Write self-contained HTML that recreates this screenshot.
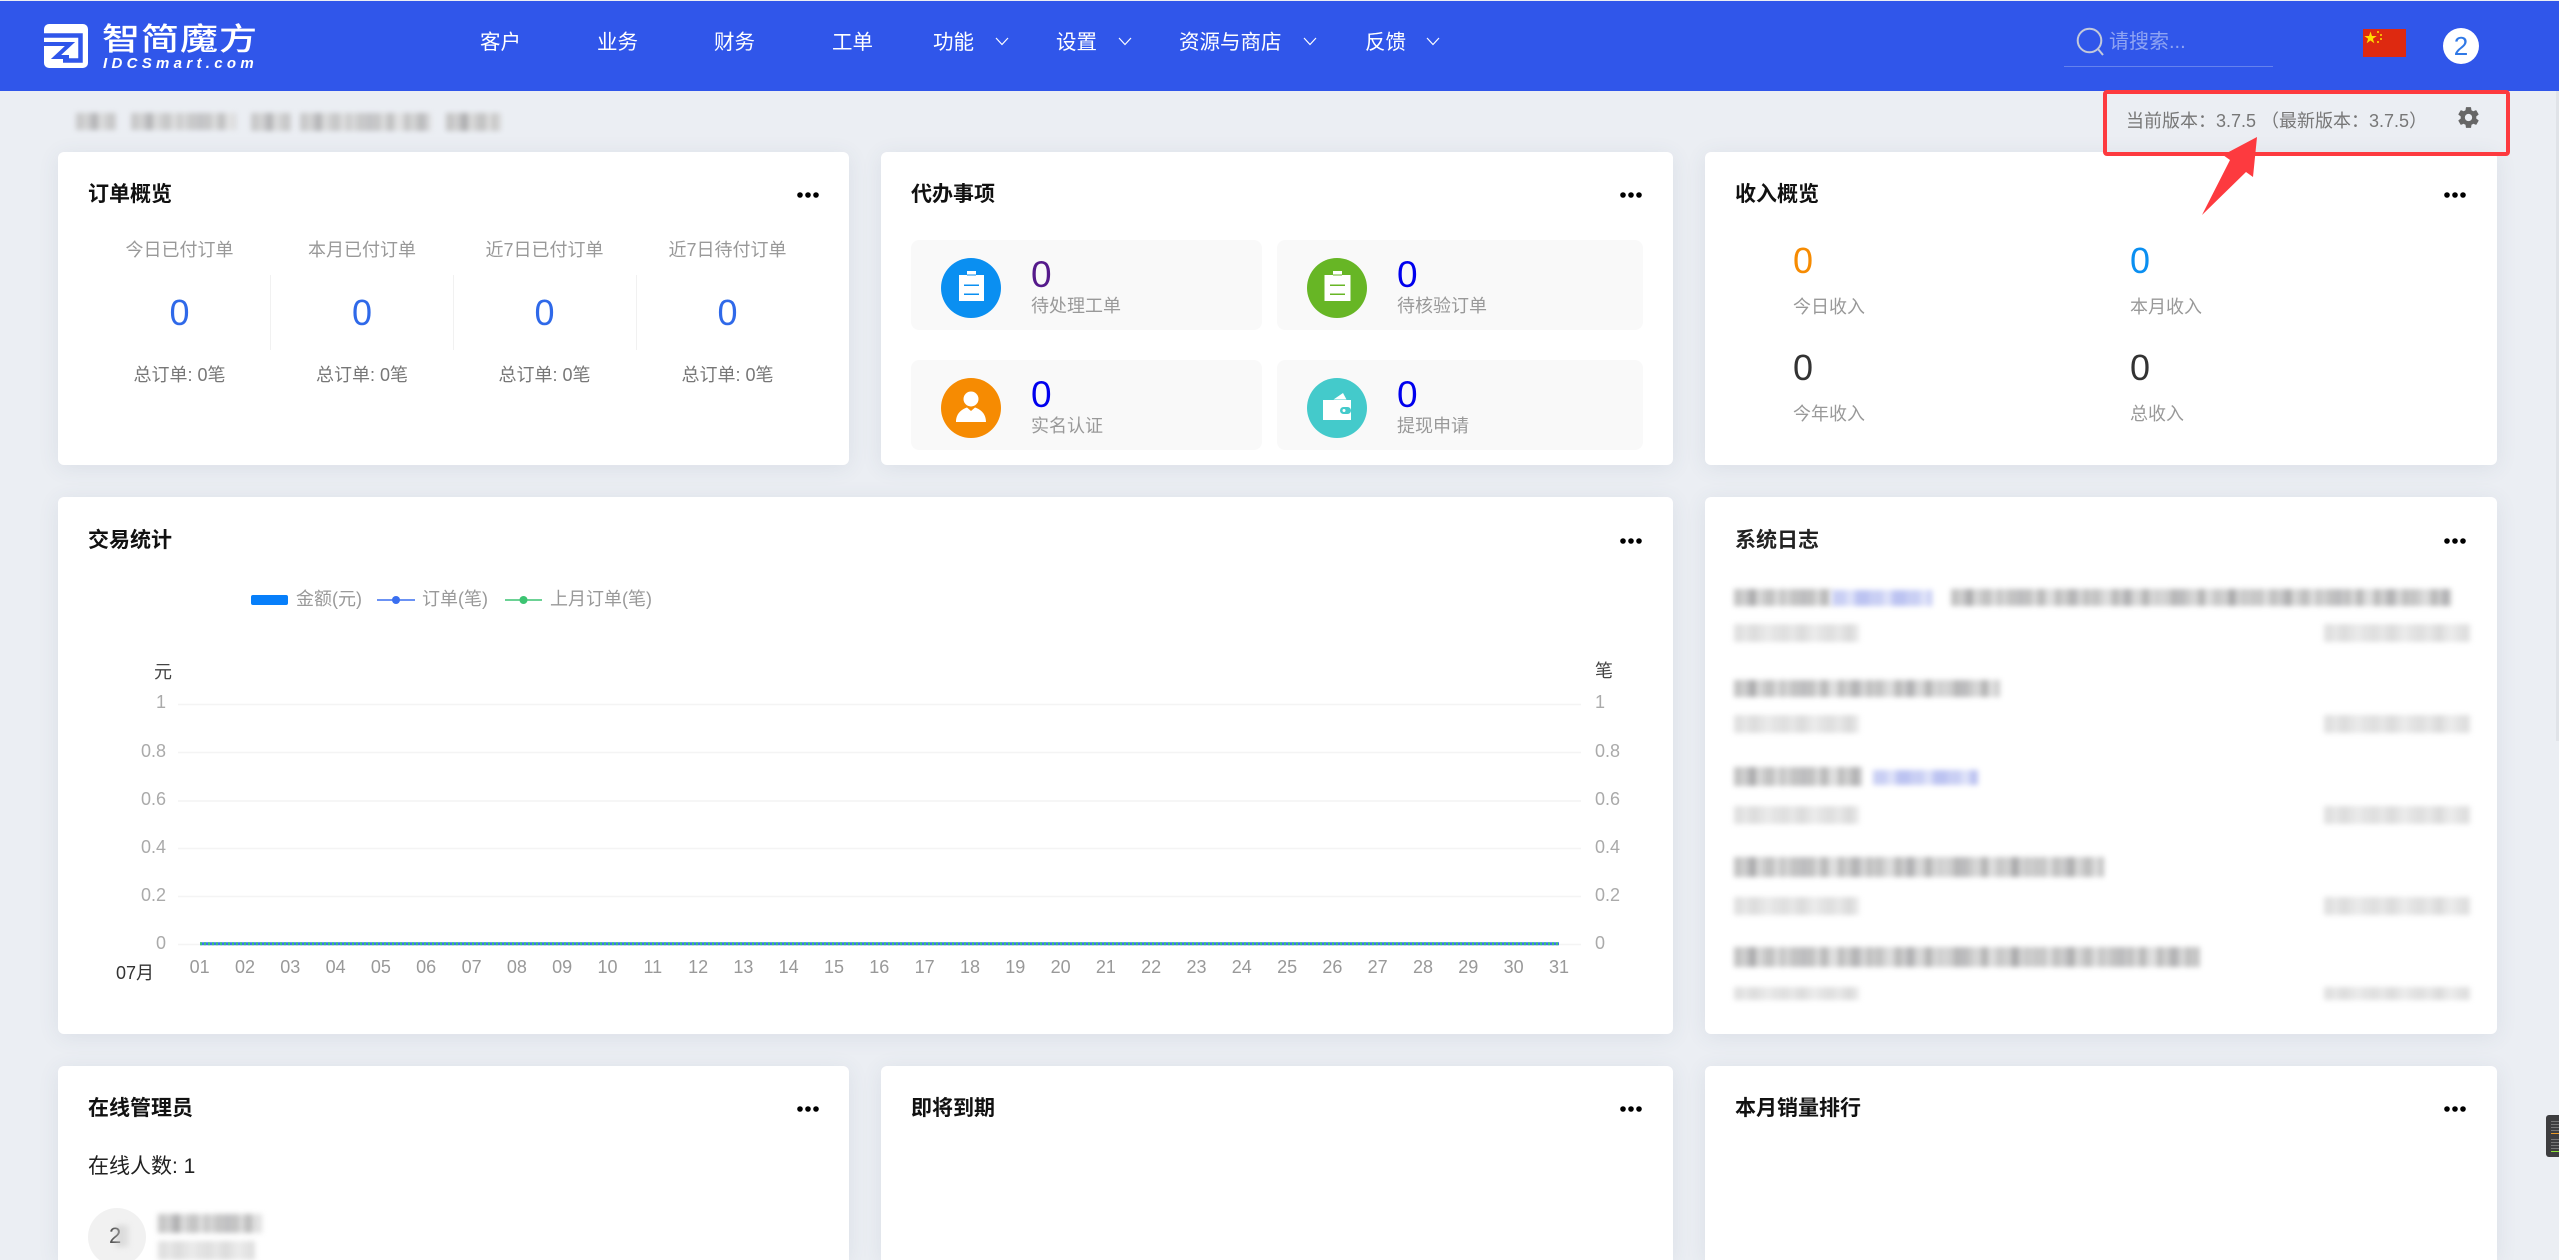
<!DOCTYPE html>
<html lang="zh-CN">
<head>
<meta charset="utf-8">
<title>智简魔方</title>
<style>
html,body{margin:0;padding:0;width:2559px;height:1260px;overflow:hidden;background:#ebeef3;font-family:"Liberation Sans","Noto Sans CJK SC",sans-serif}
*{box-sizing:border-box}
#w{position:relative;width:2559px;height:1260px;overflow:hidden;background:#ebeef3}
.a,.t{position:absolute}
.t{white-space:nowrap;line-height:30px;height:30px;font-size:18px;margin-top:1px}
.hd{position:absolute;left:0;top:1px;width:2559px;height:90px;background:#3056ea}
.nav{color:#fff;font-size:20.5px;top:27px}
.chev{position:absolute;top:36px;width:14px;height:10px}
.card{position:absolute;background:#fff;border-radius:6px;box-shadow:0 3px 22px rgba(60,75,110,.09)}
.card.cut{border-radius:6px 6px 0 0}
.title{font-weight:700;font-size:21px;color:#111;top:0}
.dots{position:absolute;width:22px;height:6px}
.c{text-align:center;transform:translateX(-50%)}
.lbl{color:#999}
.big{font-size:36px;line-height:40px;height:40px}
.tile{position:absolute;background:#f9f9f9;border-radius:8px;height:90px}
.circ{position:absolute;width:60px;height:60px;border-radius:50%}
.m{position:absolute;filter:blur(2.6px)}
.m1{background:repeating-linear-gradient(90deg,rgba(0,0,0,.07) 0 7px,transparent 7px 17px,rgba(0,0,0,.13) 17px 22px,transparent 22px 29px),repeating-linear-gradient(90deg,#d0d0d0 0 13px,#bcbcbe 13px 21px,#d8d8d8 21px 34px,#c6c6c6 34px 41px,#dfdfdf 41px 53px)}
.m2{background:repeating-linear-gradient(90deg,rgba(0,0,0,.03) 0 9px,transparent 9px 23px),repeating-linear-gradient(90deg,#e7e7e7 0 15px,#dedede 15px 24px,#ececec 24px 37px,#e4e4e4 37px 47px)}
.mb{background:repeating-linear-gradient(90deg,#c9cff4 0 14px,#dde1f9 14px 23px,#bcc3f1 23px 37px)}
</style>
</head>
<body>
<div id="w">

<div class="hd"></div>

<!-- logo -->
<svg class="a" style="left:44px;top:24px" width="44" height="44" viewBox="0 0 44 44">
  <rect width="44" height="44" rx="5" fill="#fff"/>
  <path d="M0 11.500H36.500V36.500H19" fill="none" stroke="#3056ea" stroke-width="4.500"/>
  <path d="M0 20H26L12 33H25" fill="none" stroke="#3056ea" stroke-width="4"/>
</svg>
<div class="t" style="left:102px;top:18px;height:36px;line-height:36px;font-size:38px;font-weight:500;color:#fff;letter-spacing:1px;transform:scaleY(.82);transform-origin:left center;font-family:'Noto Sans CJK SC',sans-serif">智简魔方</div>
<div class="t" style="left:103px;top:55px;height:16px;line-height:16px;font-size:15px;font-weight:700;font-style:italic;color:#fff;letter-spacing:4.300px">IDCSmart.com</div>

<!-- nav -->
<div class="t nav" style="left:480px">客户</div>
<div class="t nav" style="left:597px">业务</div>
<div class="t nav" style="left:714px">财务</div>
<div class="t nav" style="left:832px">工单</div>
<div class="t nav" style="left:933px">功能</div>
<div class="t nav" style="left:1056px">设置</div>
<div class="t nav" style="left:1179px">资源与商店</div>
<div class="t nav" style="left:1365px">反馈</div>
<svg class="chev" style="left:995px" viewBox="0 0 14 10"><path d="M1 2L7 8.500L13 2" fill="none" stroke="#fff" stroke-width="1.200"/></svg>
<svg class="chev" style="left:1118px" viewBox="0 0 14 10"><path d="M1 2L7 8.500L13 2" fill="none" stroke="#fff" stroke-width="1.200"/></svg>
<svg class="chev" style="left:1303px" viewBox="0 0 14 10"><path d="M1 2L7 8.500L13 2" fill="none" stroke="#fff" stroke-width="1.200"/></svg>
<svg class="chev" style="left:1426px" viewBox="0 0 14 10"><path d="M1 2L7 8.500L13 2" fill="none" stroke="#fff" stroke-width="1.200"/></svg>

<!-- search -->
<svg class="a" style="left:2076px;top:27px" width="28" height="29" viewBox="0 0 28 29"><circle cx="13.500" cy="13.500" r="11.800" fill="none" stroke="#c3c9db" stroke-width="2"/><path d="M22 22L27 28" stroke="#c3c9db" stroke-width="2"/></svg>
<div class="t" style="left:2109px;top:26px;font-size:20px;color:#8fa4f3">请搜索...</div>
<div class="a" style="left:2064px;top:66px;width:209px;height:1px;background:#6482ee"></div>

<!-- flag -->
<svg class="a" style="left:2363px;top:29px" width="43" height="28" viewBox="0 0 43 28">
  <rect width="43" height="28" fill="#de2910"/>
  <polygon points="7.500,2.500 9,7 13.700,7 9.900,9.800 11.300,14.200 7.500,11.500 3.700,14.200 5.100,9.800 1.300,7 6,7" fill="#ffde00"/>
  <circle cx="15" cy="3" r="1" fill="#ffde00"/><circle cx="18" cy="6" r="1" fill="#ffde00"/><circle cx="18" cy="10" r="1" fill="#ffde00"/><circle cx="15" cy="13" r="1" fill="#ffde00"/>
</svg>
<div class="a" style="left:2443px;top:28px;width:36px;height:36px;border-radius:50%;background:#fff;color:#2f78e6;font-size:26px;line-height:36px;text-align:center">2</div>

<!-- top note (blurred) -->
<div class="m m1" style="left:76px;top:113px;width:40px;height:17px;opacity:.85"></div>
<div class="m m1" style="left:131px;top:113px;width:105px;height:17px;opacity:.85"></div>
<div class="m m1" style="left:251px;top:113px;width:40px;height:18px;opacity:.85"></div>
<div class="m m1" style="left:300px;top:113px;width:131px;height:18px;opacity:.85"></div>
<div class="m m1" style="left:446px;top:113px;width:55px;height:18px;opacity:.95"></div>

<!-- CARD 1 -->
<div class="card" style="left:58px;top:152px;width:791px;height:313px"></div>
<div class="t title" style="left:88px;top:179px">订单概览</div>
<svg class="dots" style="left:797px;top:192px" viewBox="0 0 22 6"><circle cx="3" cy="3" r="2.800"/><circle cx="11" cy="3" r="2.800"/><circle cx="19" cy="3" r="2.800"/></svg>

<div class="t c lbl" style="left:179.500px;top:234px">今日已付订单</div>
<div class="t c lbl" style="left:362px;top:234px">本月已付订单</div>
<div class="t c lbl" style="left:544.500px;top:234px">近7日已付订单</div>
<div class="t c lbl" style="left:727.500px;top:234px">近7日待付订单</div>
<div class="t c big" style="left:179.500px;top:292px;color:#2f69e9">0</div>
<div class="t c big" style="left:362px;top:292px;color:#2f69e9">0</div>
<div class="t c big" style="left:544.500px;top:292px;color:#2f69e9">0</div>
<div class="t c big" style="left:727.500px;top:292px;color:#2f69e9">0</div>
<div class="a" style="left:270px;top:275px;width:1px;height:75px;background:#f1f1f1"></div>
<div class="a" style="left:453px;top:275px;width:1px;height:75px;background:#f1f1f1"></div>
<div class="a" style="left:636px;top:275px;width:1px;height:75px;background:#f1f1f1"></div>
<div class="t c" style="left:179.500px;top:359px;color:#777">总订单: 0笔</div>
<div class="t c" style="left:362px;top:359px;color:#777">总订单: 0笔</div>
<div class="t c" style="left:544.500px;top:359px;color:#777">总订单: 0笔</div>
<div class="t c" style="left:727.500px;top:359px;color:#777">总订单: 0笔</div>

<!-- CARD 2 -->
<div class="card" style="left:881px;top:152px;width:792px;height:313px"></div>
<div class="t title" style="left:911px;top:179px">代办事项</div>
<svg class="dots" style="left:1620px;top:192px" viewBox="0 0 22 6"><circle cx="3" cy="3" r="2.800"/><circle cx="11" cy="3" r="2.800"/><circle cx="19" cy="3" r="2.800"/></svg>

<div class="tile" style="left:911px;top:240px;width:351px"></div>
<div class="tile" style="left:1277px;top:240px;width:366px"></div>
<div class="tile" style="left:911px;top:360px;width:351px"></div>
<div class="tile" style="left:1277px;top:360px;width:366px"></div>

<div class="circ" style="left:941px;top:258px;background:#0a8ff1"></div>
<svg class="a" style="left:941px;top:258px" width="60" height="60" viewBox="0 0 60 60"><path d="M18 17H26V13H35V17H43V43H18Z" fill="#fff"/><rect x="26" y="16.500" width="9" height="1" fill="#0a8ff1"/><rect x="23" y="26.500" width="15" height="1.500" fill="#0a8ff1"/><rect x="23" y="35.500" width="15" height="1.500" fill="#0a8ff1"/></svg>
<div class="circ" style="left:1307px;top:258px;background:#67b625"></div>
<svg class="a" style="left:1307px;top:258px" width="60" height="60" viewBox="0 0 60 60"><path d="M17.500 17H26V13H35V17H43.500V43H17.500Z" fill="#fff"/><rect x="26" y="16.500" width="9" height="1" fill="#67b625"/><rect x="23" y="26.500" width="15" height="1.500" fill="#67b625"/><rect x="23" y="35.500" width="15" height="1.500" fill="#67b625"/></svg>
<div class="circ" style="left:941px;top:378px;background:#f68b02"></div>
<svg class="a" style="left:941px;top:378px" width="60" height="60" viewBox="0 0 60 60"><circle cx="30" cy="21" r="7.500" fill="#fff"/><path d="M15 44C15 36 20 31.500 26 29.500L30 33L34 29.500C40 31.500 45 36 45 44Z" fill="#fff"/></svg>
<div class="circ" style="left:1307px;top:378px;background:#44cacb"></div>
<svg class="a" style="left:1307px;top:378px" width="60" height="60" viewBox="0 0 60 60"><path d="M26.500 21.500L36 15L39.500 21.500Z" fill="#fff"/><rect x="16" y="22" width="28" height="20" fill="#fff"/><rect x="33" y="29" width="11" height="7" rx="3.500" fill="#44cacb"/><circle cx="37" cy="32.500" r="1.500" fill="#fff"/></svg>

<div class="t" style="left:1031px;top:254px;height:40px;line-height:40px;font-size:37px;color:#551a8b">0</div>
<div class="t" style="left:1397px;top:254px;height:40px;line-height:40px;font-size:37px;color:#0000ee">0</div>
<div class="t" style="left:1031px;top:374px;height:40px;line-height:40px;font-size:37px;color:#0000ee">0</div>
<div class="t" style="left:1397px;top:374px;height:40px;line-height:40px;font-size:37px;color:#0000ee">0</div>
<div class="t lbl" style="left:1031px;top:290px">待处理工单</div>
<div class="t lbl" style="left:1397px;top:290px">待核验订单</div>
<div class="t lbl" style="left:1031px;top:410px">实名认证</div>
<div class="t lbl" style="left:1397px;top:410px">提现申请</div>

<!-- CARD 3 -->
<div class="card" style="left:1705px;top:152px;width:792px;height:313px"></div>
<div class="t title" style="left:1735px;top:179px">收入概览</div>
<svg class="dots" style="left:2444px;top:192px" viewBox="0 0 22 6"><circle cx="3" cy="3" r="2.800"/><circle cx="11" cy="3" r="2.800"/><circle cx="19" cy="3" r="2.800"/></svg>
<div class="t big" style="left:1793px;top:240px;color:#f68b02">0</div>
<div class="t big" style="left:2130px;top:240px;color:#0a8ff1">0</div>
<div class="t big" style="left:1793px;top:347px;color:#333">0</div>
<div class="t big" style="left:2130px;top:347px;color:#333">0</div>
<div class="t lbl" style="left:1793px;top:291px">今日收入</div>
<div class="t lbl" style="left:2130px;top:291px">本月收入</div>
<div class="t lbl" style="left:1793px;top:398px">今年收入</div>
<div class="t lbl" style="left:2130px;top:398px">总收入</div>

<!-- CHART CARD -->
<div class="card" style="left:58px;top:497px;width:1615px;height:537px"></div>
<div class="t title" style="left:88px;top:525px">交易统计</div>
<svg class="dots" style="left:1620px;top:538px" viewBox="0 0 22 6"><circle cx="3" cy="3" r="2.800"/><circle cx="11" cy="3" r="2.800"/><circle cx="19" cy="3" r="2.800"/></svg>

<svg class="a" style="left:0;top:0" width="2559" height="1260" viewBox="0 0 2559 1260" font-family="'Liberation Sans','Noto Sans CJK SC',sans-serif" font-size="18">
  <!-- legend -->
  <rect x="251" y="595" width="37" height="10" rx="2" fill="#077ffa"/>
  <text x="296" y="605" fill="#999">金额(元)</text>
  <path d="M377 600H415" stroke="#3a6ff0" stroke-width="1.500"/><circle cx="396" cy="600" r="4" fill="#3a6ff0"/>
  <text x="422" y="605" fill="#999">订单(笔)</text>
  <path d="M505 600H542" stroke="#3cc472" stroke-width="1.500"/><circle cx="523.500" cy="600" r="4" fill="#3cc472"/>
  <text x="550" y="605" fill="#999">上月订单(笔)</text>
  <!-- grid -->
  <g stroke="#f4f4f4" stroke-width="1.500">
    <path d="M178 704.500H1581"/><path d="M178 752.500H1581"/><path d="M178 801H1581"/><path d="M178 848.500H1581"/><path d="M178 896.500H1581"/><path d="M178 944.500H1581"/>
  </g>
  <!-- line -->
  <path d="M200 943.700H1559" stroke="#3a6ff0" stroke-width="3"/>
  <path d="M200 943.700H1559" stroke="#3cc472" stroke-width="3" stroke-dasharray="2 2"/>
  <!-- y left -->
  <text x="172" y="678" fill="#444" text-anchor="end">元</text>
  <g fill="#aaa" text-anchor="end">
    <text x="166" y="708">1</text><text x="166" y="757">0.8</text><text x="166" y="805">0.6</text><text x="166" y="853">0.4</text><text x="166" y="901">0.2</text><text x="166" y="949">0</text>
  </g>
  <!-- y right -->
  <text x="1595" y="677" fill="#444">笔</text>
  <g fill="#aaa">
    <text x="1595" y="708">1</text><text x="1595" y="757">0.8</text><text x="1595" y="805">0.6</text><text x="1595" y="853">0.4</text><text x="1595" y="901">0.2</text><text x="1595" y="949">0</text>
  </g>
  <text x="116" y="979" fill="#333">07月</text>
  <g fill="#999" text-anchor="middle">
    <text x="199.700" y="973">01</text><text x="245" y="973">02</text><text x="290.300" y="973">03</text><text x="335.600" y="973">04</text><text x="380.900" y="973">05</text><text x="426.200" y="973">06</text><text x="471.600" y="973">07</text><text x="516.900" y="973">08</text><text x="562.200" y="973">09</text><text x="607.500" y="973">10</text><text x="652.800" y="973">11</text><text x="698.100" y="973">12</text><text x="743.400" y="973">13</text><text x="788.700" y="973">14</text><text x="834" y="973">15</text><text x="879.300" y="973">16</text><text x="924.600" y="973">17</text><text x="970" y="973">18</text><text x="1015.300" y="973">19</text><text x="1060.600" y="973">20</text><text x="1105.900" y="973">21</text><text x="1151.200" y="973">22</text><text x="1196.500" y="973">23</text><text x="1241.800" y="973">24</text><text x="1287.100" y="973">25</text><text x="1332.400" y="973">26</text><text x="1377.700" y="973">27</text><text x="1423" y="973">28</text><text x="1468.300" y="973">29</text><text x="1513.700" y="973">30</text><text x="1559" y="973">31</text>
  </g>
</svg>

<!-- LOG CARD -->
<div class="card" style="left:1705px;top:497px;width:792px;height:537px"></div>
<div class="t title" style="left:1735px;top:525px;color:#222">系统日志</div>
<svg class="dots" style="left:2444px;top:538px" viewBox="0 0 22 6"><circle cx="3" cy="3" r="2.800"/><circle cx="11" cy="3" r="2.800"/><circle cx="19" cy="3" r="2.800"/></svg>

<div class="m m1" style="left:1734px;top:589px;width:98px;height:17px"></div>
<div class="m mb" style="left:1832px;top:590px;width:100px;height:16px"></div>
<div class="m m1" style="left:1951px;top:589px;width:500px;height:17px"></div>
<div class="m m2" style="left:1734px;top:624px;width:125px;height:18px"></div>
<div class="m m2" style="left:2324px;top:624px;width:146px;height:18px"></div>

<div class="m m1" style="left:1734px;top:680px;width:266px;height:17px"></div>
<div class="m m2" style="left:1734px;top:715px;width:125px;height:18px"></div>
<div class="m m2" style="left:2324px;top:715px;width:146px;height:18px"></div>

<div class="m m1" style="left:1734px;top:767px;width:128px;height:19px"></div>
<div class="m mb" style="left:1873px;top:770px;width:105px;height:15px"></div>
<div class="m m2" style="left:1734px;top:806px;width:125px;height:18px"></div>
<div class="m m2" style="left:2324px;top:806px;width:146px;height:18px"></div>

<div class="m m1" style="left:1734px;top:857px;width:370px;height:20px"></div>
<div class="m m2" style="left:1734px;top:897px;width:125px;height:18px"></div>
<div class="m m2" style="left:2324px;top:897px;width:146px;height:18px"></div>

<div class="m m1" style="left:1734px;top:947px;width:466px;height:20px"></div>
<div class="m m2" style="left:1734px;top:987px;width:125px;height:13px"></div>
<div class="m m2" style="left:2324px;top:987px;width:146px;height:13px"></div>

<!-- ROW 3 -->
<div class="card cut" style="left:58px;top:1066px;width:791px;height:194px"></div>
<div class="t title" style="left:88px;top:1093px">在线管理员</div>
<svg class="dots" style="left:797px;top:1106px" viewBox="0 0 22 6"><circle cx="3" cy="3" r="2.800"/><circle cx="11" cy="3" r="2.800"/><circle cx="19" cy="3" r="2.800"/></svg>
<div class="t" style="left:88px;top:1151px;font-size:21px;color:#222">在线人数: 1</div>
<div class="a" style="left:88px;top:1208px;width:58px;height:52px;overflow:hidden"><div style="width:58px;height:58px;border-radius:50%;background:#f1f1f1"></div></div>
<div class="t" style="left:109px;top:1220px;color:#555;font-size:22px">2</div>
<div class="m m1" style="left:116px;top:1225px;width:13px;height:22px;opacity:.5"></div>
<div class="m m1" style="left:158px;top:1214px;width:104px;height:19px;opacity:.95"></div>
<div class="m m2" style="left:158px;top:1241px;width:97px;height:19px"></div>

<div class="card cut" style="left:881px;top:1066px;width:792px;height:194px"></div>
<div class="t title" style="left:911px;top:1093px">即将到期</div>
<svg class="dots" style="left:1620px;top:1106px" viewBox="0 0 22 6"><circle cx="3" cy="3" r="2.800"/><circle cx="11" cy="3" r="2.800"/><circle cx="19" cy="3" r="2.800"/></svg>

<div class="card cut" style="left:1705px;top:1066px;width:792px;height:194px"></div>
<div class="t title" style="left:1735px;top:1093px">本月销量排行</div>
<svg class="dots" style="left:2444px;top:1106px" viewBox="0 0 22 6"><circle cx="3" cy="3" r="2.800"/><circle cx="11" cy="3" r="2.800"/><circle cx="19" cy="3" r="2.800"/></svg>

<!-- version + annotation -->
<div class="t" style="left:2126px;top:105px;color:#777;font-size:18px">当前版本：3.7.5 （最新版本：3.7.5）</div>
<svg class="a" style="left:2456px;top:105px" width="25" height="25" viewBox="0 0 24 24"><path fill="#666" d="M19.400 13c.04-.33.1-.66.1-1s-.06-.67-.1-1l2.100-1.650a.5.500 0 0 0 .12-.64l-2-3.460a.5.500 0 0 0-.61-.22l-2.490 1a7.300 7.300 0 0 0-1.690-.98l-.38-2.650A.49.490 0 0 0 14 2h-4a.49.490 0 0 0-.49.420l-.38 2.650c-.61.25-1.170.59-1.690.98l-2.490-1a.49.490 0 0 0-.61.22l-2 3.460a.49.490 0 0 0 .12.64L4.570 11c-.04.33-.07.66-.07 1s.03.67.07 1l-2.110 1.650a.49.490 0 0 0-.12.640l2 3.460c.12.22.39.3.61.220l2.490-1c.52.4 1.080.73 1.690.98l.38 2.650c.03.24.24.42.49.420h4c.25 0 .46-.18.49-.42l.38-2.650c.61-.25 1.170-.59 1.690-.98l2.490 1c.22.08.49 0 .61-.22l2-3.460a.5.500 0 0 0-.12-.64L19.400 13zM12 15.500a3.500 3.500 0 1 1 0-7 3.500 3.500 0 0 1 0 7z"/></svg>
<div class="a" style="left:2103px;top:90px;width:407px;height:66px;border:4px solid #fd3a3f;border-radius:4px"></div>
<svg class="a" style="left:0;top:0" width="2559" height="230" viewBox="0 0 2559 230"><polygon points="2257,137 2253,177 2246,172 2202,215 2230,160 2223,155" fill="#fd3a3f"/></svg>

<!-- scrollbar and side widget -->
<div class="a" style="left:2556px;top:91px;width:3px;height:650px;background:#e0e3e8"></div>
<div class="a" style="left:2546px;top:1115px;width:13px;height:42px;background:#3d3d3f;border-radius:3px 0 0 3px"></div>
<div class="a" style="left:2551px;top:1121px;width:8px;height:12px;background:repeating-linear-gradient(180deg,#777 0 1px,transparent 1px 3px)"></div>
<div class="a" style="left:2551px;top:1133px;width:8px;height:1px;background:#e89a2a"></div>
<div class="a" style="left:2551px;top:1139px;width:8px;height:11px;background:repeating-linear-gradient(180deg,#777 0 1px,transparent 1px 3px)"></div>
<div class="a" style="left:2551px;top:1151px;width:8px;height:1px;background:#8ee23a"></div>

</div>
</body>
</html>
